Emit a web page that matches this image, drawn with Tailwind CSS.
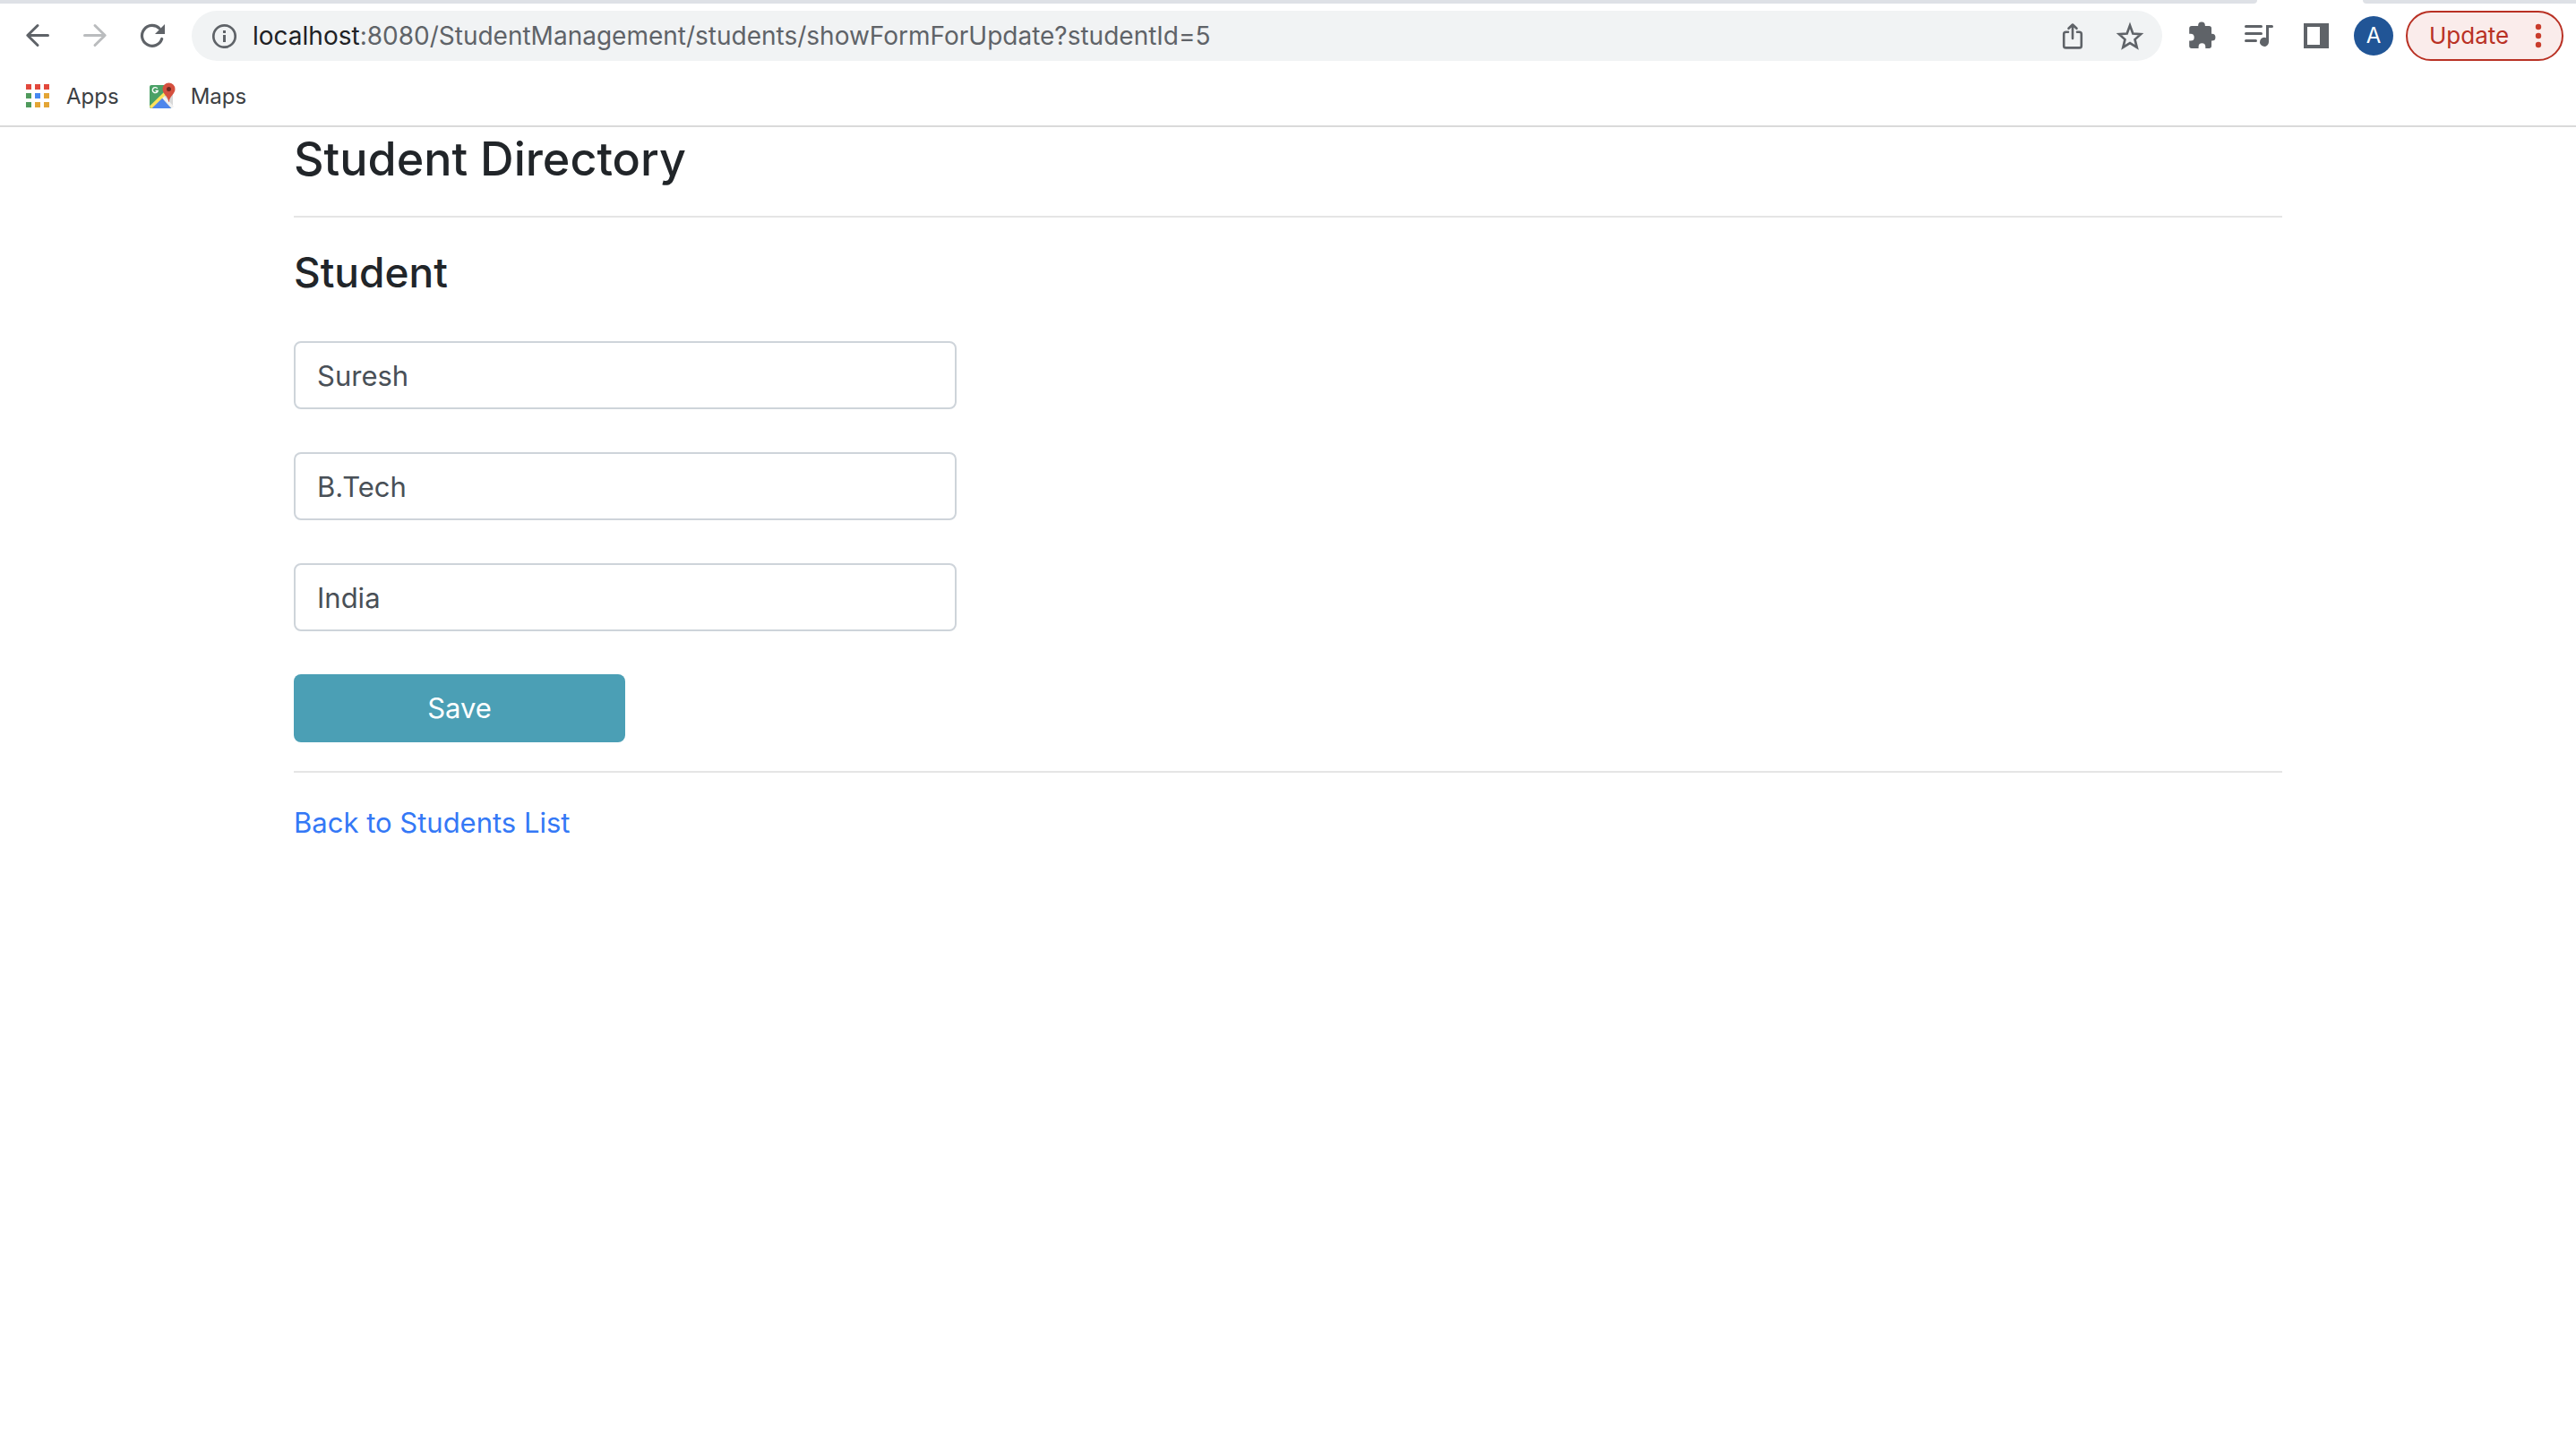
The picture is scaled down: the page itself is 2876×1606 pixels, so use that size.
<!DOCTYPE html>
<html lang="en">
<head>
<meta charset="utf-8">
<meta name="viewport" content="width=device-width, initial-scale=1">
<title>Student Directory</title>
<script src="https://cdn.jsdelivr.net/npm/@tailwindcss/browser@4"></script>
</head>
<body class="min-h-screen bg-white font-[Inter,Roboto,sans-serif] text-[#212529]">

<header class="border-b-2 border-[#dadada]">
  <!-- Bottom edge of the tab strip -->
  <div class="flex h-1 gap-[118px]">
    <div class="flex-1 rounded-br-[10px] bg-[#dee1e6]"></div>
    <div class="w-[238px] rounded-bl-[10px] bg-[#dee1e6]"></div>
  </div>

  <!-- Toolbar -->
  <div class="flex h-18 items-center px-[14px]">
    <nav class="flex gap-2 pr-4" aria-label="History">
      <button type="button" aria-label="Back" class="flex size-14 items-center justify-center text-[#5f6368]">
        <svg class="size-8" viewBox="0 0 32 32" fill="none" stroke="currentColor" stroke-width="3" stroke-linecap="round" stroke-linejoin="round"><path d="M27.500 15.500H5M16 4.500L4.800 15.500L16 26.500"/></svg>
      </button>
      <button type="button" aria-label="Forward" class="flex size-14 items-center justify-center text-[#babcbe]">
        <svg class="size-8" viewBox="0 0 32 32" fill="none" stroke="currentColor" stroke-width="3" stroke-linecap="round" stroke-linejoin="round"><path d="M4.500 15.500H27M16 4.500L27.200 15.500L16 26.500"/></svg>
      </button>
      <button type="button" aria-label="Reload" class="flex size-14 items-center justify-center text-[#5f6368]">
        <svg class="size-8" viewBox="0 0 32 32"><path d="M26.700 19.500A11.400 11.400 0 1 1 24.200 8" fill="none" stroke="currentColor" stroke-width="3.200" stroke-linecap="round"/><path d="M30 3V14H19Z" fill="currentColor"/></svg>
      </button>
    </nav>

    <div class="flex h-14 flex-1 items-center rounded-full bg-[#f1f3f4] pr-1 pl-[22px] text-[#5f6368]">
      <svg class="size-7" viewBox="0 0 28 28" aria-hidden="true"><circle cx="14.500" cy="14.500" r="12.200" fill="none" stroke="currentColor" stroke-width="2.700"/><path d="M13 13h3v8h-3zM13 8h3v3h-3z" fill="currentColor"/></svg>
      <p class="flex-1 pl-[18px] text-[28px] leading-8"><span class="text-[#202124]">localhost</span>:8080/StudentManagement/students/showFormForUpdate?studentId=5</p>
      <button type="button" aria-label="Share" class="flex h-14 w-16 items-center justify-center">
        <svg class="size-8" viewBox="0 0 32 32" fill="none" stroke="currentColor" stroke-width="2.600" stroke-linecap="round" stroke-linejoin="round"><path d="M11 11.800H8.500Q6.200 11.800 6.200 14V27.200Q6.200 29.400 8.500 29.400H23.500Q25.800 29.400 25.800 27.200V14Q25.800 11.800 23.500 11.800H21M16 19V4M11.500 7.800L16 3.500L20.500 7.800"/></svg>
      </button>
      <button type="button" aria-label="Bookmark this page" class="flex h-14 w-16 items-center justify-center">
        <svg class="size-8" viewBox="1.500 1 29 29"><path d="M16 5L19 13.200L27 13.800L21 19.200L23 27.200L16 22.800L9 27.200L11 19.200L5 13.800L13 13.200Z" fill="none" stroke="currentColor" stroke-width="2.400"/></svg>
      </button>
    </div>

    <div class="flex items-center pl-3 text-[#5f6368]">
      <button type="button" aria-label="Extensions" class="flex h-14 w-16 items-center justify-center">
        <svg class="size-8" viewBox="2 2.500 29 29" fill="currentColor"><path d="M13 6.500a3.500 3.500 0 0 1 7 0V7H24q2.500 0 2.500 2.500V15H27a3.500 3.500 0 0 1 0 7H26.500V27.300Q26.500 29.800 24 29.800H20.400V28a3.500 3.500 0 0 0-7 0V29.800H6.500Q4 29.800 4 27.300V22H5.500a3.500 3.500 0 0 0 0-7H4V9.500Q4 7 6.500 7H13Z"/></svg>
      </button>
      <button type="button" aria-label="Media controls" class="flex h-14 w-16 items-center justify-center">
        <svg class="size-8" viewBox="0 0 32 32"><path d="M1.500 5.500H18.500M1.500 13.500H18.500M1.500 21.500H12.500" fill="none" stroke="currentColor" stroke-width="3" stroke-linecap="round"/><path d="M24 4H30.500Q32 4 32 5.500T30.500 7H27V23A5 5 0 1 1 24 18.300Z" fill="currentColor"/></svg>
      </button>
      <button type="button" aria-label="Side panel" class="flex h-14 w-16 items-center justify-center">
        <svg class="size-7" viewBox="0 0 28 28"><path d="M0 0H28V28H0ZM4 4V24H18V4Z" fill="currentColor" fill-rule="evenodd"/></svg>
      </button>
      <button type="button" aria-label="Profile" class="ml-[10px] size-11 rounded-full bg-[#215596] text-[24px] leading-8 text-white">A</button>
      <button type="button" class="ml-[14px] flex h-14 w-44 items-center justify-between rounded-full border-2 border-[#b93124] bg-[#faeceb] pr-[22px] pl-6 text-[26px] leading-8 text-[#b93124]">
        Update
        <svg class="h-8 w-2" viewBox="0 0 8 32" fill="#c93c2c" aria-hidden="true"><circle cx="4" cy="6" r="3.200"/><circle cx="4" cy="16" r="3.200"/><circle cx="4" cy="26" r="3.200"/></svg>
      </button>
    </div>
  </div>

  <!-- Bookmarks bar -->
  <nav class="flex h-16 items-center gap-8 px-7 text-[24px] leading-8 text-[#3c4043]" aria-label="Bookmarks">
    <a href="#" class="flex items-center gap-[18px]">
      <svg class="size-7" viewBox="0 0 28 28" aria-hidden="true"><path d="M1 0h6v6H1zM11 0h6v6h-6zM21 0h6v6h-6z" fill="#e2483c"/><path d="M1 10h6v6H1zM1 20h6v6H1z" fill="#4f9a5c"/><path d="M11 10h6v6h-6z" fill="#4688f1"/><path d="M21 10h6v6h-6zM11 20h6v6h-6zM21 20h6v6h-6z" fill="#e3a535"/></svg>
      Apps
    </a>
    <a href="#" class="flex items-center gap-4">
      <svg class="size-8" viewBox="0 0 32 32" aria-hidden="true">
        <path d="M4 3H26V29H4Q2 29 2 27V5Q2 3 4 3Z" fill="#4aa166"/>
        <path d="M16 16L28 11V27L26 29L16 20Z" fill="#d8d8d8"/>
        <path d="M15.500 17L4 29H26Z" fill="#4f86ec"/>
        <path d="M17 16L28 28" stroke="#f1f1f1" stroke-width="3"/>
        <path d="M19 12.500L3 28" stroke="#fce25b" stroke-width="3.600"/>
        <path d="M23.500 0.500A7 7 0 0 1 30.500 7.500C30.500 13 24.500 15 23.700 22H23.300C22.500 15 16.500 13 16.500 7.500A7 7 0 0 1 23.500 0.500Z" fill="#d5503f"/>
        <circle cx="23.500" cy="7.500" r="2.500" fill="#6d2a22"/>
        <path d="M10.800 6.900A3 3 0 1 0 11.200 9.500H8.500" fill="none" stroke="#fff" stroke-width="1.400"/>
      </svg>
      Maps
    </a>
  </nav>
</header>

<main class="mx-auto max-w-[2280px] px-[30px] text-[31px] leading-12">
  <h1 class="pt-1 text-[52px] leading-[63px] font-medium">Student Directory</h1>
  <hr class="my-8 border-t-2 border-[#e5e5e5]">
  <h2 class="mb-12 text-[46px] leading-[58px] font-medium">Student</h2>
  <form class="flex flex-col items-start gap-12">
    <input type="text" name="name" aria-label="Name" value="Suresh" class="h-19 w-1/3 rounded-lg border-2 border-[#ced4da] bg-white px-6 text-[#495057]">
    <input type="text" name="department" aria-label="Department" value="B.Tech" class="h-19 w-1/3 rounded-lg border-2 border-[#ced4da] bg-white px-6 text-[#495057]">
    <input type="text" name="country" aria-label="Country" value="India" class="h-19 w-1/3 rounded-lg border-2 border-[#ced4da] bg-white px-6 text-[#495057]">
    <button type="submit" class="h-19 w-1/6 rounded-lg bg-[#4b9fb5] text-white">Save</button>
  </form>
  <hr class="my-8 border-t-2 border-[#e5e5e5]">
  <a href="#" class="text-[#3478f6]">Back to Students List</a>
</main>

</body>
</html>
